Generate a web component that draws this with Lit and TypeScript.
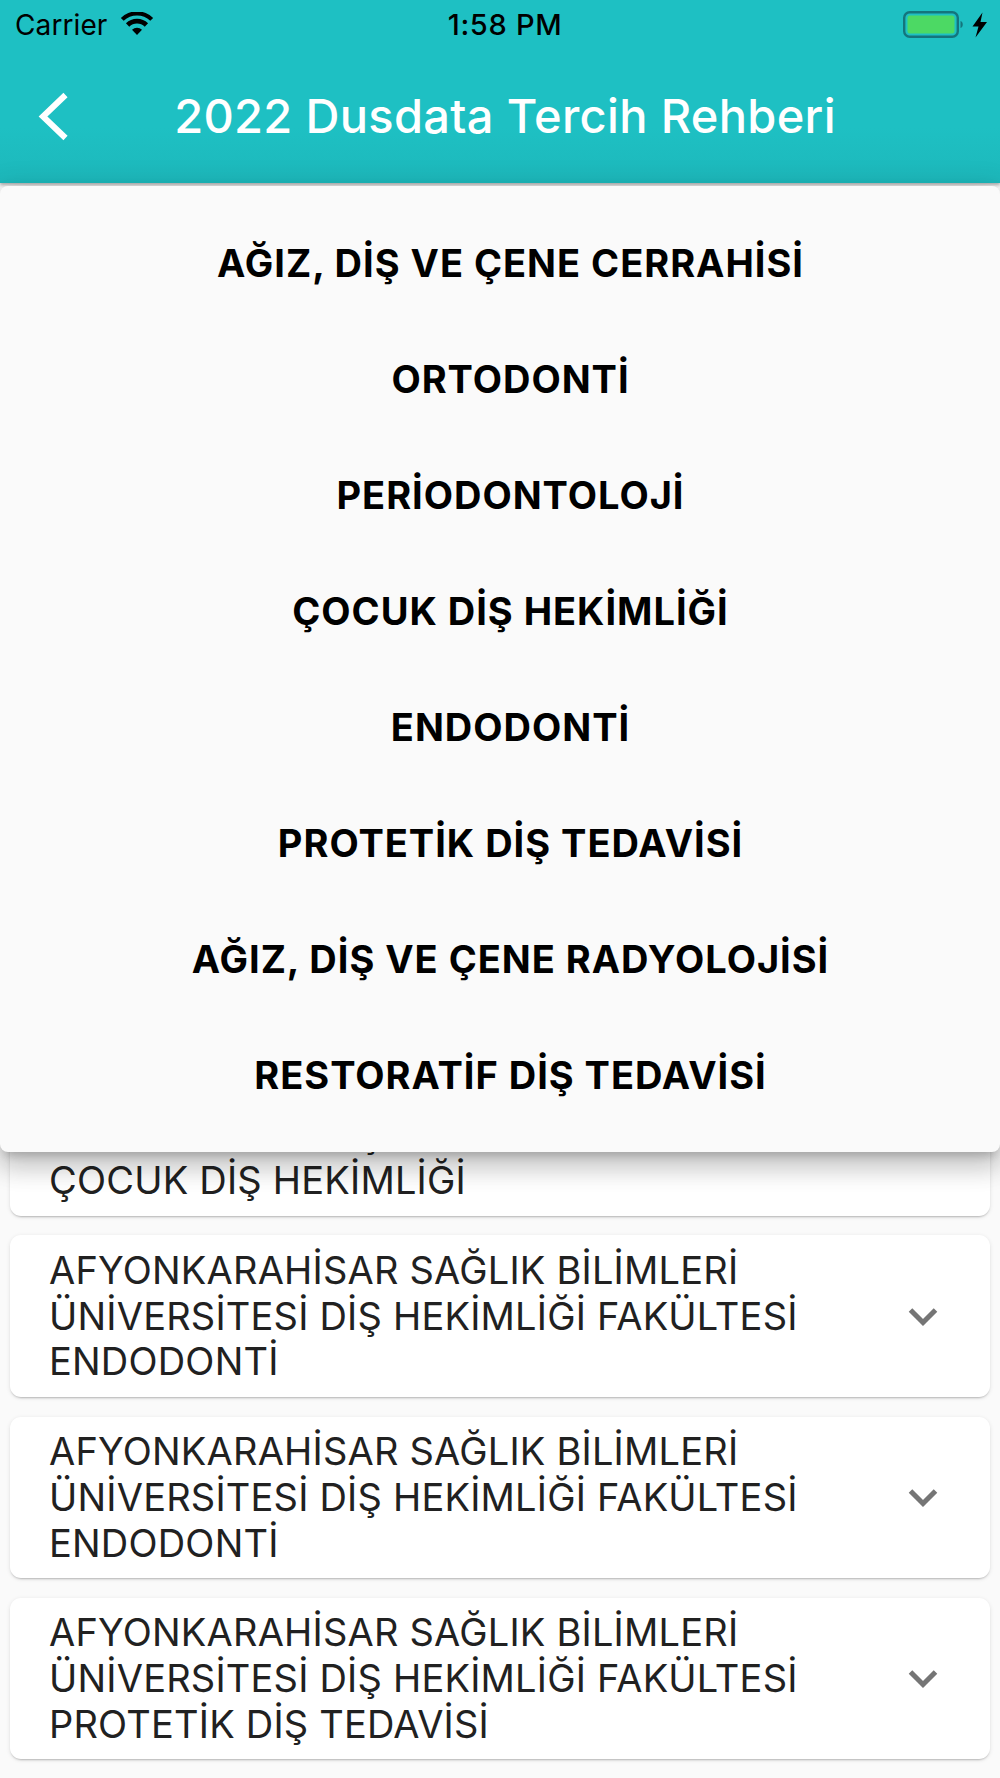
import { LitElement, html, css } from "lit";
import { customElement } from "lit/decorators.js";

const MENU = [
  "AĞIZ, DİŞ VE ÇENE CERRAHİSİ",
  "ORTODONTİ",
  "PERİODONTOLOJİ",
  "ÇOCUK DİŞ HEKİMLİĞİ",
  "ENDODONTİ",
  "PROTETİK DİŞ TEDAVİSİ",
  "AĞIZ, DİŞ VE ÇENE RADYOLOJİSİ",
  "RESTORATİF DİŞ TEDAVİSİ",
];
const L1 = "AFYONKARAHİSAR SAĞLIK BİLİMLERİ";
const L2 = "ÜNİVERSİTESİ DİŞ HEKİMLİĞİ FAKÜLTESİ";
const CARDS = ["ÇOCUK DİŞ HEKİMLİĞİ", "ENDODONTİ", "ENDODONTİ", "PROTETİK DİŞ TEDAVİSİ"];

@customElement("app-root")
export class AppRoot extends LitElement {
  static styles = css`
    :host {
      display: block;
      width: 1000px;
      height: 1778px;
      position: relative;
      overflow: hidden;
      background: #fafafa;
      font-family: Inter, "Liberation Sans", sans-serif;
    }
    .appbar {
      height: 183px;
      background: linear-gradient(#1ec0c3 0, #1ec0c3 70%, #1db8bb 100%);
      box-shadow: 0 2px 3px rgba(0, 0, 0, 0.3);
      position: relative;
      z-index: 1;
    }
    .status {
      height: 50px;
      display: flex;
      align-items: center;
      padding: 0 12px 0 15px;
      color: #000;
      position: relative;
    }
    .carrier { font-size: 28px; letter-spacing: 0.1px; line-height: 52px; }
    .wifi { margin-left: 13px; margin-top: -2px; display: block; }
    .time {
      position: absolute;
      left: 10px;
      right: 0;
      text-align: center;
      font-size: 29px;
      font-weight: 500;
      letter-spacing: 0.7px;
      line-height: 52px;
    }
    .right { margin-left: auto; margin-top: -1px; display: flex; align-items: center; gap: 7px; }
    .right svg { display: block; }
    .nav {
      height: 133px;
      display: flex;
      align-items: center;
      padding-top: 1px;
      box-sizing: border-box;
      position: relative;
    }
    .back { display: block; margin-left: 37px; }
    .title {
      position: absolute;
      left: 10px;
      right: 0;
      top: 0;
      text-align: center;
      color: #fff;
      font-size: 47px;
      font-weight: 500;
      letter-spacing: 0.32px;
      line-height: 132px;
    }
    .list {
      padding: 871px 10px 0;
      display: flex;
      flex-direction: column;
      gap: 19.8px;
    }
    .card {
      height: 161.5px;
      box-sizing: border-box;
      background: #fff;
      border-radius: 11px;
      box-shadow: 0 2px 2px -1px rgba(0, 0, 0, 0.22), 0 1px 4px rgba(0, 0, 0, 0.1);
      display: flex;
      align-items: center;
      padding: 1px 52px 0 39px;
      justify-content: space-between;
    }
    .card-text {
      font-size: 38px;
      letter-spacing: 0.2px;
      line-height: 45.8px;
      color: #212121;
      white-space: nowrap;
    }
    .chev { display: block; }
    .menu {
      position: absolute;
      left: 0;
      right: 0;
      top: 186px;
      height: 966px;
      box-sizing: border-box;
      padding: 19px 0 19px 21px;
      background: #fafafa;
      border-radius: 8px;
      box-shadow: 0 8px 10px -5px rgba(0, 0, 0, 0.2), 0 16px 24px 2px rgba(0, 0, 0, 0.14),
        0 6px 30px 5px rgba(0, 0, 0, 0.12);
      z-index: 2;
      display: flex;
      flex-direction: column;
    }
    .item {
      height: 116.05px;
      display: flex;
      align-items: center;
      justify-content: center;
      font-size: 38px;
      font-weight: 700;
      letter-spacing: 0.98px;
      color: #000;
      white-space: nowrap;
    }
  `;

  render() {
    return html`
      <div class="appbar">
        <div class="status">
          <span class="carrier">Carrier</span>
          <svg class="wifi" width="34" height="24" viewBox="0 0 36 26">
            <path d="M18 25 L12.6 19.2 A8 8 0 0 1 23.4 19.2 Z" fill="#000"/>
            <path d="M9.6 16 L6 12.2 A17 17 0 0 1 30 12.2 L26.4 16 A12 12 0 0 0 9.6 16 Z" fill="#000"/>
            <path d="M3.6 9.6 L0.5 6.4 A25 25 0 0 1 35.5 6.4 L32.4 9.6 A21 21 0 0 0 3.6 9.6 Z" fill="#000"/>
          </svg>
          <span class="time">1:58 PM</span>
          <div class="right">
            <svg width="62" height="28" viewBox="0 0 62 28">
              <rect x="1.2" y="1.2" width="53.6" height="24.6" rx="5.5" fill="none" stroke="#14757c" stroke-width="2.4"/>
              <rect x="4.5" y="4.5" width="47" height="18" rx="2.5" fill="#4cd964"/>
              <path d="M57.5 10 C60.5 10.5 60.5 16.5 57.5 17 Z" fill="#14757c"/>
            </svg>
            <svg width="16" height="26" viewBox="0 0 16 26">
              <path d="M10.5 0.5 L0.5 14.5 H6.5 L3.5 25.5 L15 10 H8.5 Z" fill="#000"/>
            </svg>
          </div>
        </div>
        <div class="nav">
          <svg class="back" width="32" height="50" viewBox="0 0 32 50">
            <path d="M28.5 3 L6 24.5 L28.5 46" fill="none" stroke="#fff" stroke-width="6"/>
          </svg>
          <div class="title">2022 Dusdata Tercih Rehberi</div>
        </div>
      </div>
      <div class="list">
        ${CARDS.map(
          (c) => html`
            <div class="card">
              <div class="card-text">${L1}<br />${L2}<br />${c}</div>
              <svg class="chev" width="30" height="20" viewBox="0 0 30 20">
                <path d="M2.5 3 L15 15.5 L27.5 3" fill="none" stroke="#757575" stroke-width="5"/>
              </svg>
            </div>
          `
        )}
      </div>
      <div class="menu">
        ${MENU.map((m) => html`<div class="item">${m}</div>`)}
      </div>
    `;
  }
}
